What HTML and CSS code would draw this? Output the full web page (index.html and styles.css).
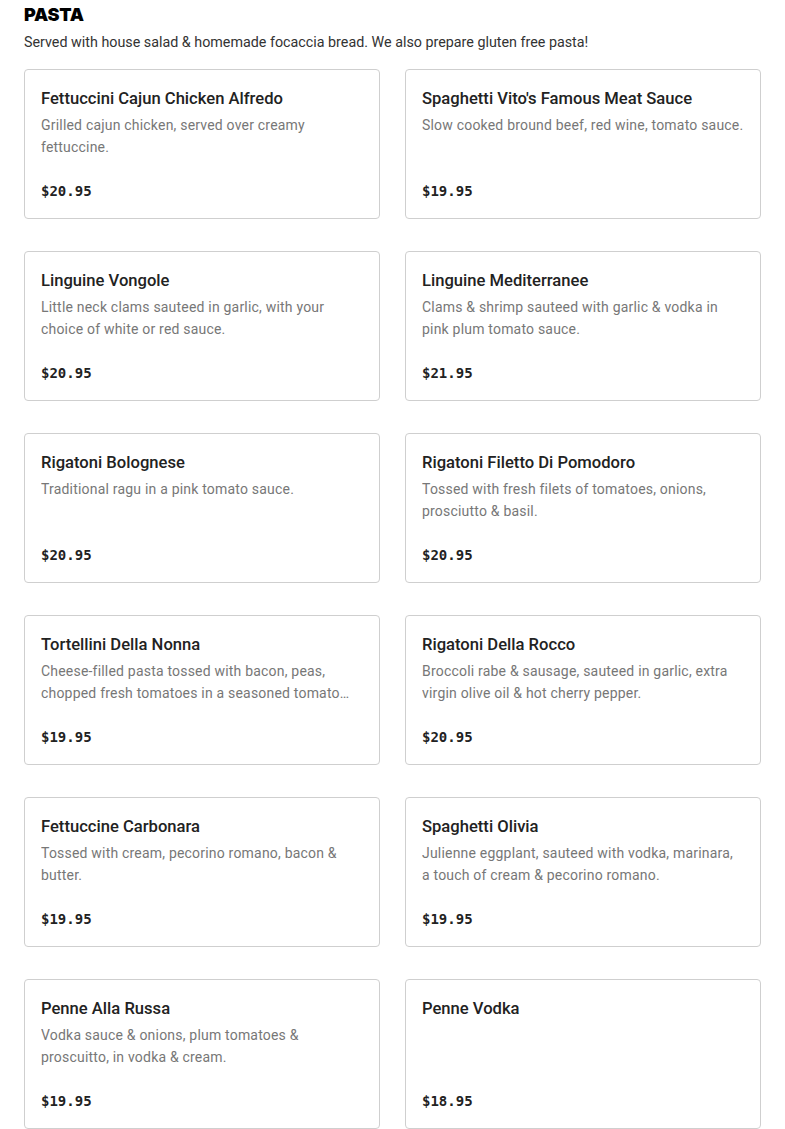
FILE: index.html
```html
<!DOCTYPE html>
<html lang="en">
<head>
    <meta charset="UTF-8">
    <meta name="viewport" content="width=device-width, initial-scale=1.0">
    <title>Pasta</title>
    <link rel="stylesheet" href="styles.css">
</head>
<body>
    <section class="menu-section">
        <h2 class="section-title">PASTA</h2>
        <p class="section-note">Served with house salad &amp; homemade focaccia bread. We also prepare gluten free pasta!</p>

        <div class="menu-grid">
            <div class="menu-item">
                <h3>Fettuccini Cajun Chicken Alfredo</h3>
                <p class="desc">Grilled cajun chicken, served over creamy fettuccine.</p>
                <div class="price">$20.95</div>
            </div>
            <div class="menu-item">
                <h3>Spaghetti Vito's Famous Meat Sauce</h3>
                <p class="desc">Slow cooked bround beef, red wine, tomato sauce.</p>
                <div class="price">$19.95</div>
            </div>
            <div class="menu-item">
                <h3>Linguine Vongole</h3>
                <p class="desc">Little neck clams sauteed in garlic, with your choice of white or red sauce.</p>
                <div class="price">$20.95</div>
            </div>
            <div class="menu-item">
                <h3>Linguine Mediterranee</h3>
                <p class="desc">Clams &amp; shrimp sauteed with garlic &amp; vodka in pink plum tomato sauce.</p>
                <div class="price">$21.95</div>
            </div>
            <div class="menu-item">
                <h3>Rigatoni Bolognese</h3>
                <p class="desc">Traditional ragu in a pink tomato sauce.</p>
                <div class="price">$20.95</div>
            </div>
            <div class="menu-item">
                <h3>Rigatoni Filetto Di Pomodoro</h3>
                <p class="desc">Tossed with fresh filets of tomatoes, onions, prosciutto &amp; basil.</p>
                <div class="price">$20.95</div>
            </div>
            <div class="menu-item">
                <h3>Tortellini Della Nonna</h3>
                <p class="desc">Cheese-filled pasta tossed with bacon, peas, chopped fresh tomatoes in a seasoned tomato sauce.</p>
                <div class="price">$19.95</div>
            </div>
            <div class="menu-item">
                <h3>Rigatoni Della Rocco</h3>
                <p class="desc">Broccoli rabe &amp; sausage, sauteed in garlic, extra virgin olive oil &amp; hot cherry pepper.</p>
                <div class="price">$20.95</div>
            </div>
            <div class="menu-item">
                <h3>Fettuccine Carbonara</h3>
                <p class="desc">Tossed with cream, pecorino romano, bacon &amp; butter.</p>
                <div class="price">$19.95</div>
            </div>
            <div class="menu-item">
                <h3>Spaghetti Olivia</h3>
                <p class="desc">Julienne eggplant, sauteed with vodka, marinara, a touch of cream &amp; pecorino romano.</p>
                <div class="price">$19.95</div>
            </div>
            <div class="menu-item">
                <h3>Penne Alla Russa</h3>
                <p class="desc">Vodka sauce &amp; onions, plum tomatoes &amp; proscuitto, in vodka &amp; cream.</p>
                <div class="price">$19.95</div>
            </div>
            <div class="menu-item">
                <h3>Penne Vodka</h3>
                <p class="desc"></p>
                <div class="price">$18.95</div>
            </div>
        </div>
    </section>
</body>
</html>
```

FILE: styles.css
```css
* {
    margin: 0;
    padding: 0;
    box-sizing: border-box;
}

body {
    font-family: Roboto, 'Noto Sans', sans-serif;
    background: #fff;
    color: #222;
}

.menu-section {
    padding: 3px 24px 0;
}

.section-title {
    font-family: Inter, sans-serif;
    font-size: 18px;
    font-weight: 900;
    line-height: 24px;
    color: #000;
    letter-spacing: -0.2px;
}

.section-note {
    font-size: 14.3px;
    line-height: 22px;
    color: #333;
    margin-top: 4px;
}

.menu-grid {
    display: grid;
    grid-template-columns: 1fr 1fr;
    column-gap: 25px;
    row-gap: 32px;
    margin-top: 16px;
}

.menu-item {
    height: 150px;
    border: 1px solid #cfcfcf;
    border-radius: 4px;
    padding: 16px;
}

.menu-item h3 {
    font-size: 16.6px;
    font-weight: 500;
    line-height: 24px;
    margin-top: 1px;
    color: #222;
}

.menu-item .desc {
    font-size: 14px;
    letter-spacing: 0.2px;
    line-height: 22px;
    color: #777;
    margin-top: 3px;
    height: 44px;
    display: -webkit-box;
    -webkit-line-clamp: 2;
    -webkit-box-orient: vertical;
    overflow: hidden;
}

.menu-item .price {
    font-family: 'DejaVu Sans Mono', monospace;
    font-size: 14px;
    font-weight: bold;
    line-height: 20px;
    margin-top: 23px;
    color: #222;
}
```
